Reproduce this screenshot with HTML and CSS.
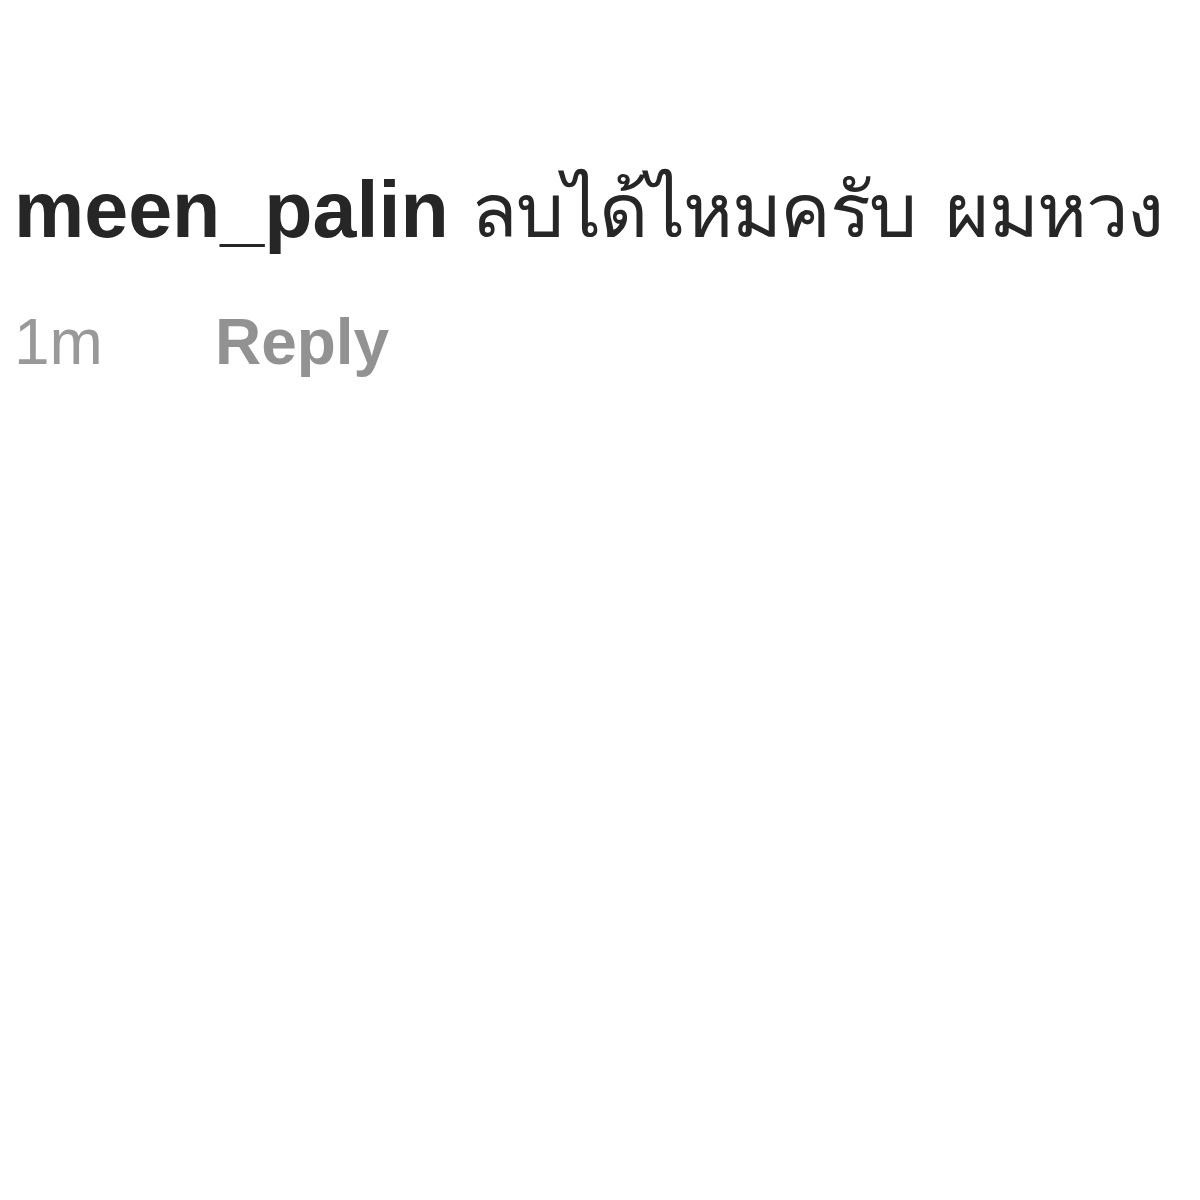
FILE: index.html
```html
<!DOCTYPE html>
<html>
<head>
<meta charset="utf-8">
<link rel="stylesheet" href="styles.css">
</head>
<body>
<div class="comment">
  <p class="text"><span class="user">meen_palin</span> <span class="body">ลบได้ไหมครับ ผมหวง</span></p>
  <div class="meta"><span class="time">1m</span><span class="reply">Reply</span></div>
</div>
</body>
</html>
```
FILE: styles.css
```css
html, body { margin: 0; padding: 0; background: #fff; }
body { font-family: "Liberation Sans", "Noto Sans", sans-serif; }
.comment { padding: 160px 0 0 14px; }
.text { margin: 0; font-size: 79px; line-height: 100px; color: #262626; white-space: nowrap; }
.user { font-weight: bold; }
.body { font-size: 76px; letter-spacing: -1.5px; word-spacing: 10px; }
.meta { display: flex; gap: 112px; margin-top: 41px; font-size: 64px; line-height: 80px; color: #999999; }
.reply { font-weight: bold; color: #929292; }
```
